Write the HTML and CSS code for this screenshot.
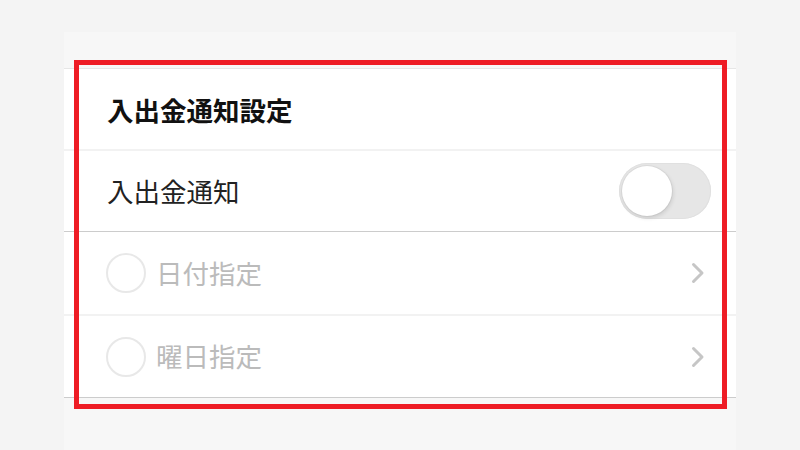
FILE: index.html
```html
<!DOCTYPE html>
<html lang="ja">
<head>
<meta charset="utf-8">
<title>入出金通知設定</title>
<link rel="stylesheet" href="styles.css">
</head>
<body>
<div class="panel">
  <div class="section">
    <div class="row header">入出金通知設定</div>
    <div class="row toggle-row">
      <span class="label">入出金通知</span>
      <span class="toggle"><span class="knob"></span></span>
    </div>
    <div class="row option sep-light">
      <span class="radio"></span>
      <span class="label muted">日付指定</span>
      <svg class="chev" width="14" height="22" viewBox="0 0 14 22"><path d="M2.5 2.5 L11 11 L2.5 19.5" fill="none" stroke="#c6c6c6" stroke-width="3" stroke-linecap="round" stroke-linejoin="round"/></svg>
    </div>
    <div class="row option last">
      <span class="radio"></span>
      <span class="label muted">曜日指定</span>
      <svg class="chev" width="14" height="22" viewBox="0 0 14 22"><path d="M2.5 2.5 L11 11 L2.5 19.5" fill="none" stroke="#c6c6c6" stroke-width="3" stroke-linecap="round" stroke-linejoin="round"/></svg>
    </div>
  </div>
</div>
<div class="highlight"></div>
</body>
</html>
```
FILE: styles.css
```css
html, body {
  margin: 0;
  padding: 0;
}
body {
  background: #f4f4f4;
  font-family: "Noto Sans CJK JP", "Noto Sans", sans-serif;
  height: 450px;
  overflow: hidden;
}
.panel {
  width: 672px;
  margin: 32px auto 0;
  height: 418px;
  background: #f7f7f7;
  padding-top: 36px;
  box-sizing: border-box;
}
.section {
  background: #fff;
  border-top: 1px solid #e6e6e6;
  border-bottom: 1px solid #cccccc;
}
.row {
  display: flex;
  align-items: center;
  padding: 0 25px 0 43px;
  box-sizing: border-box;
}
.header {
  height: 82px;
  font-size: 26.5px;
  font-weight: 700;
  color: #111;
  border-bottom: 2px solid #f2f2f2;
}
.toggle-row {
  height: 81px;
  justify-content: space-between;
  border-bottom: 1px solid #cccccc;
}
.label {
  font-size: 26.5px;
  color: #222;
  line-height: 1;
}
.muted {
  color: #bbbbbb;
  flex: 1;
}
.toggle {
  width: 92px;
  height: 56px;
  border-radius: 28px;
  background: #e6e6e6;
  box-shadow: inset 0 0 0 1px #e0e0e0;
  display: flex;
  align-items: center;
  padding-left: 3px;
  box-sizing: border-box;
}
.knob {
  width: 50px;
  height: 50px;
  border-radius: 50%;
  background: #fff;
  box-shadow: 1px 2px 4px rgba(0,0,0,0.12), 0 0 0 1px rgba(0,0,0,0.04);
}
.option {
  height: 81px;
  padding-left: 42px;
  padding-right: 31px;
}
.sep-light {
  height: 84px;
  border-bottom: 2px solid #f2f2f2;
}
.radio {
  width: 40px;
  height: 40px;
  border: 2px solid #e8e8e8;
  border-radius: 50%;
  box-sizing: border-box;
  margin-right: 10px;
  flex: none;
}
.chev {
  flex: none;
}
.highlight {
  position: absolute;
  left: 74px;
  top: 60px;
  width: 653px;
  height: 349px;
  border: 5px solid #ee1c25;
  box-sizing: border-box;
}
```
